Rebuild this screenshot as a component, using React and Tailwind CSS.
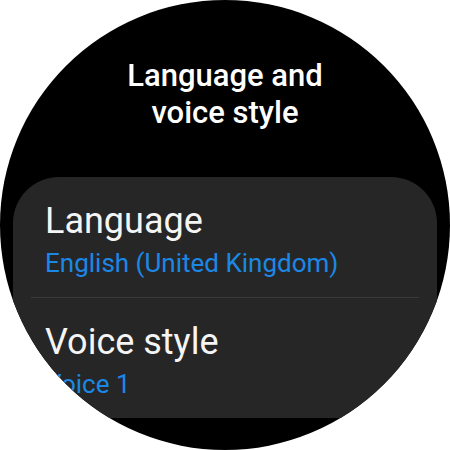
const items = [
    { title: 'Language', value: 'English (United Kingdom)' },
    { title: 'Voice style', value: 'Voice 1' },
];

const App = () => {
    return (
        <div className="w-[450px] h-[450px] bg-white" style={{ fontFamily: 'Roboto, "Noto Sans", sans-serif' }}>
            <div className="w-[450px] h-[450px] rounded-full bg-black overflow-hidden flex flex-col items-center">
                {/* Title */}
                <h1 className="mt-[57px] text-[31px] leading-[37px] font-medium text-white text-center">
                    Language and
                    <br />
                    voice style
                </h1>

                {/* Settings list */}
                <div className="mt-[46px] w-[424px] h-[241px] shrink-0 bg-[#262626] rounded-t-[46px] overflow-hidden">
                    {items.map((item, i) => (
                        <div key={item.title}>
                            {i > 0 && <div className="mx-[18px] h-px bg-[#3a3a3a]" />}
                            <div className={`px-[32px] ${i === 0 ? 'pt-[24px] pb-[19px]' : 'pt-[24px]'}`}>
                                <div className="text-[36px] leading-[40px] text-[#f5f5f5]">{item.title}</div>
                                <div className="mt-[7px] text-[26px] leading-[30px] text-[#1c88e6]">{item.value}</div>
                            </div>
                        </div>
                    ))}
                </div>
            </div>
        </div>
    );
};

export default App;
